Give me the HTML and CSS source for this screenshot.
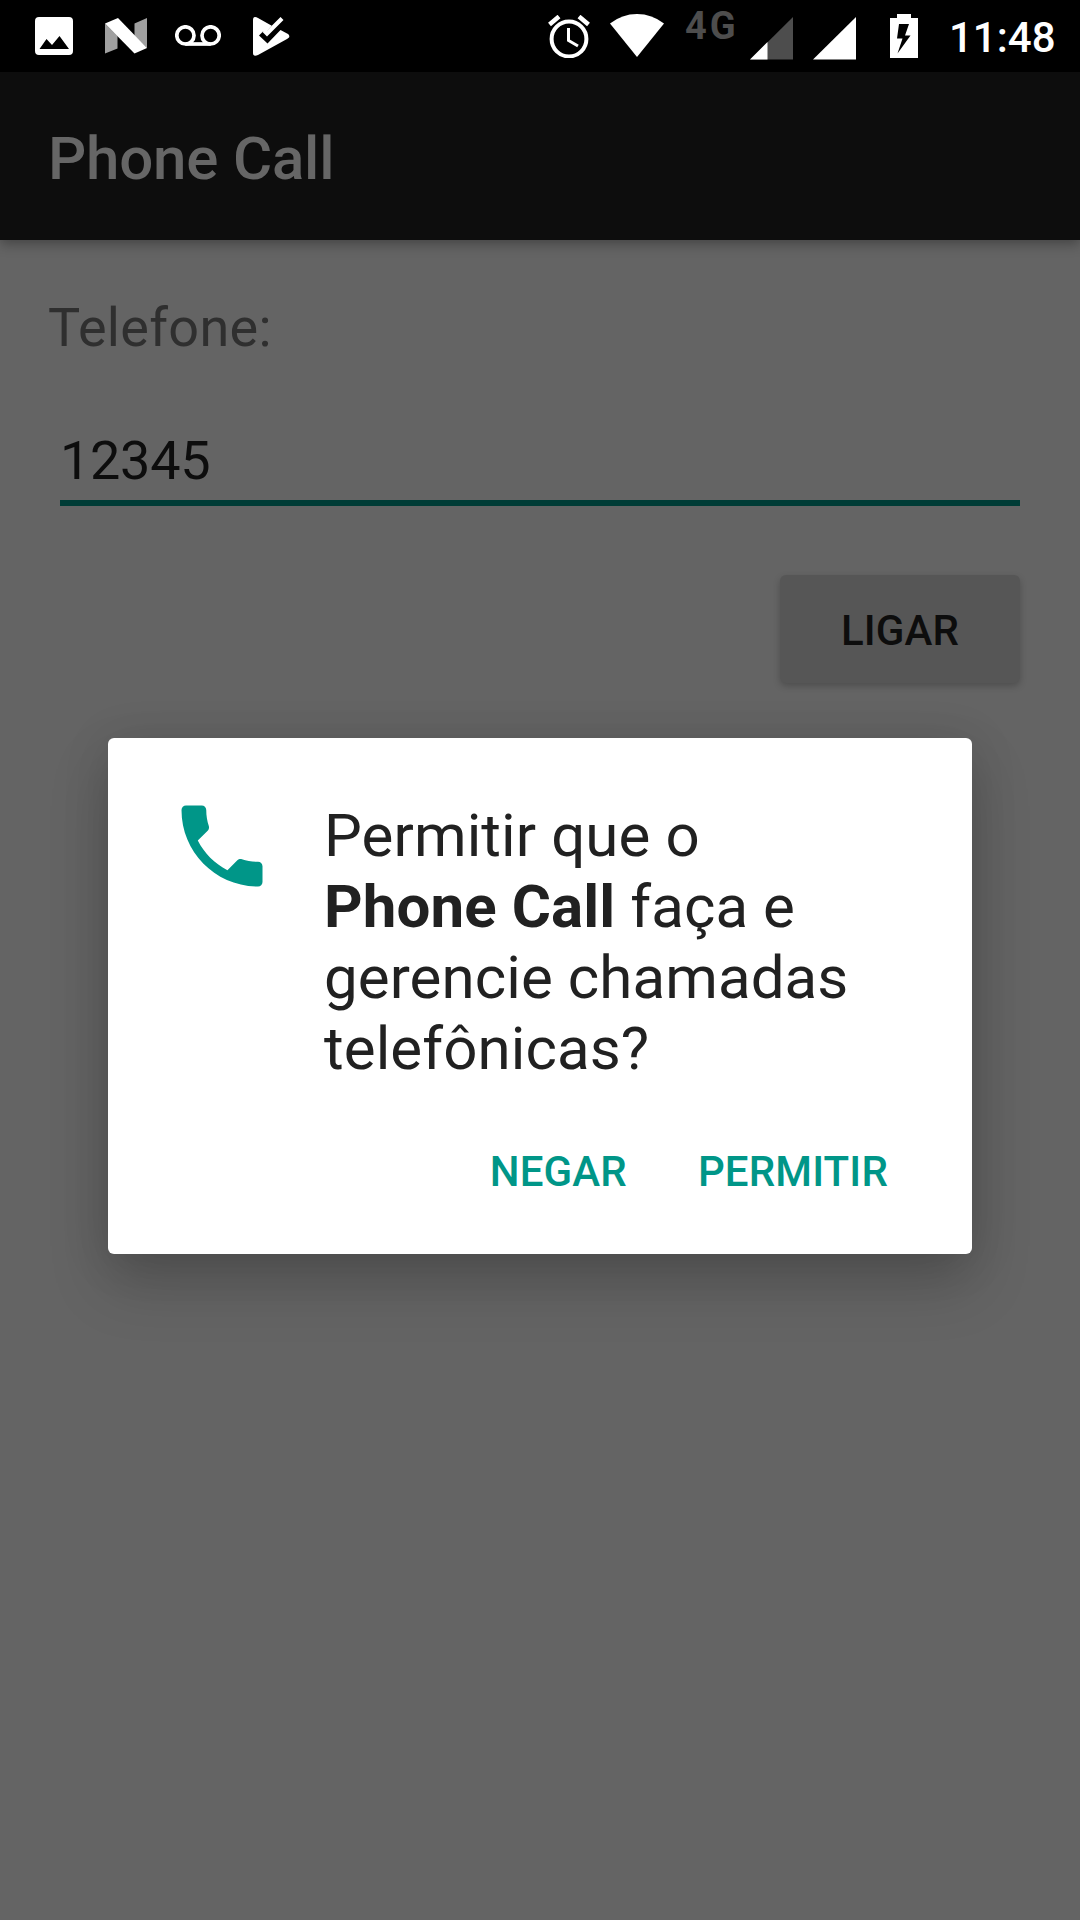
FILE: index.html
```html
<!DOCTYPE html>
<html lang="pt-BR">
<head>
<meta charset="utf-8">
<title>Phone Call</title>
<link rel="stylesheet" href="styles.css">
</head>
<body>
<div class="screen">
  <header class="status">
    <div class="status-group notifications">
      <svg width="38" height="38" viewBox="0 0 38 38"><path fill="#fff" fill-rule="evenodd" d="M4 0H34Q38 0 38 4V34Q38 38 34 38H4Q0 38 0 34V4Q0 0 4 0ZM4.500 32H34L24.500 19L17 28L11.500 22Z"/></svg>
      <svg width="42" height="36" viewBox="0 0 42 36"><path fill="#a0a0a0" d="M0 5.500L12.500 18V30.500L0 35.500ZM29.500 5.500L42 0V30L29.500 18Z"/><path fill="#fff" d="M0 5.500L13 0L42 30L29.500 35.500Z"/></svg>
      <svg width="46" height="21" viewBox="0 0 46 21"><g fill="none" stroke="#fff" stroke-width="3.700"><circle cx="10.400" cy="10.400" r="8.600"/><circle cx="35.600" cy="10.400" r="8.600"/><path d="M10.400 19H35.600"/></g></svg>
      <svg width="37" height="39" viewBox="0 0 37 39"><path fill="#fff" d="M2 0Q3.500 0 5 1L18.800 8.800L14 14L10 14.500L6 18.500L14.500 26.500L27.500 13L35 17Q37 18.500 36 20.500L34 22L5 38Q0 40 0 36V3Q0 0 2 0Z"/><path fill="none" stroke="#fff" stroke-width="4.200" d="M29 1.500L14 16.500L11 13.500"/></svg>
    </div>
    <div class="status-group system">
      <svg class="alarm" width="42" height="43" viewBox="0 0 42 43"><g fill="none" stroke="#fff"><circle cx="21" cy="24" r="17.400" stroke-width="4"/><path stroke-width="4.500" d="M1.500 9.500L11 1.500M40.500 9.500L31 1.500"/><path stroke-width="3" d="M20.500 13V25.500L30 31"/></g></svg>
      <svg class="wifi" width="54" height="43" viewBox="0 0 54 43"><path fill="#fff" d="M0 9.500Q12 0 27 0Q42 0 54 9.500L27 43Z"/></svg>
      <span class="network">4G</span>
      <svg class="signal" width="43" height="43" viewBox="0 0 43 43"><path fill="#4d4d4d" d="M43 0V42.500H0Z"/><path fill="#fff" d="M17.500 25V42.500H0Z"/></svg>
      <svg class="signal-full" width="43" height="43" viewBox="0 0 43 43"><path fill="#fff" d="M43 0V42.500H0Z"/></svg>
      <svg class="battery" width="28" height="44" viewBox="0 0 28 44"><path fill="#fff" fill-rule="evenodd" d="M7 0H21V4H28V44H0V4H7ZM9 10L7 24.500H12.500L7.500 39.500L20.500 21.500H15L19 10Z"/></svg>
      <span class="clock">11:48</span>
    </div>
  </header>
  <h1 class="appbar">Phone Call</h1>
  <main class="form">
    <label class="label">Telefone:</label>
    <div class="field">12345</div>
    <button class="call">LIGAR</button>
  </main>
  <div class="overlay">
    <section class="dialog">
      <div class="message">
        <svg class="phone" width="108" height="108" viewBox="0 0 24 24"><path fill="#009688" d="M6.620 10.790c1.440 2.830 3.760 5.140 6.590 6.590l2.200-2.200c.27-.27.67-.36 1.020-.24 1.120.37 2.330.57 3.570.57.55 0 1 .45 1 1V20c0 .55-.45 1-1 1-9.390 0-17-7.610-17-17 0-.55.45-1 1-1h3.500c.55 0 1 .45 1 1 0 1.250.2 2.450.57 3.570.11.35.03.74-.25 1.020l-2.200 2.200z"/></svg>
        <p class="question">Permitir que o<br><b>Phone Call</b> faça e<br>gerencie chamadas<br>telefônicas?</p>
      </div>
      <div class="actions"><button class="action">NEGAR</button><button class="action">PERMITIR</button></div>
    </section>
  </div>
</div>
</body>
</html>
```
FILE: styles.css
```css
* { box-sizing: border-box; }
body { margin: 0; font-family: Roboto, sans-serif; }
button { font: inherit; border: 0; padding: 0; background: none; }
svg { display: block; flex: none; }
.screen { position: relative; width: 1080px; height: 1920px; overflow: hidden; background: #646464; display: flex; flex-direction: column; }
.status { height: 72px; flex: none; background: #000; display: flex; justify-content: space-between; padding: 0 25px 0 35px; }
.status-group { display: flex; }
.notifications { align-items: center; }
.notifications svg + svg { margin-left: 32px; }
.notifications svg:nth-child(3) { margin: 0 0 2px 28px; }
.system { align-items: flex-start; }
.alarm { margin: 15px 20px 0 0; }
.wifi { margin: 14px 21px 0 0; }
.network { width: 65px; margin-top: 3px; font-size: 38px; line-height: 46px; font-weight: 700; letter-spacing: 3px; color: #4d4d4d; }
.signal { margin: 17px 20px 0 0; }
.signal-full { margin: 17px 34px 0 0; }
.battery { margin: 14px 31px 0 0; }
.clock { margin-top: 13px; width: 106px; font-size: 42px; line-height: 49px; font-weight: 500; color: #fff; white-space: nowrap; }
.appbar { position: relative; flex: none; margin: 0; height: 168px; padding: 5px 48px 0; background: #0d0d0d; color: #666; font-size: 60px; line-height: 163px; font-weight: 500; letter-spacing: -.2px; box-shadow: 0 4px 12px rgba(0,0,0,.32); }
.form { display: flex; flex-direction: column; padding: 56px 60px 0; }
.label { margin-left: -12px; color: #2f2f2f; font-size: 54px; line-height: 64px; letter-spacing: .3px; }
.field { margin-top: 69px; height: 77px; border-bottom: 6px solid #003c36; color: #0d0d0d; font-size: 54px; line-height: 64px; letter-spacing: -.3px; }
.call { align-self: flex-end; margin-top: 69px; width: 240px; height: 108px; border-radius: 6px; background: #565656; color: #0d0d0d; font-size: 42px; line-height: 108px; font-weight: 500; letter-spacing: .1px; padding-top: 2px; box-shadow: 0 3px 7px rgba(0,0,0,.22); }
.overlay { position: absolute; inset: 0; display: flex; justify-content: center; align-items: flex-start; padding-top: 738px; }
.dialog { width: 864px; height: 516px; padding: 54px 72px 0 60px; background: #fff; border-radius: 6px; box-shadow: 0 30px 60px rgba(0,0,0,.18), 0 5px 48px rgba(0,0,0,.12); }
.message { display: flex; gap: 48px; }
.question { margin: 8px 0 0; color: #212121; font-size: 60px; line-height: 71px; letter-spacing: .1px; white-space: nowrap; }
.actions { display: flex; justify-content: flex-end; gap: 71px; margin-top: 64px; padding-right: 12px; }
.action { color: #009688; font-size: 42px; line-height: 48px; font-weight: 500; letter-spacing: .15px; }
```
